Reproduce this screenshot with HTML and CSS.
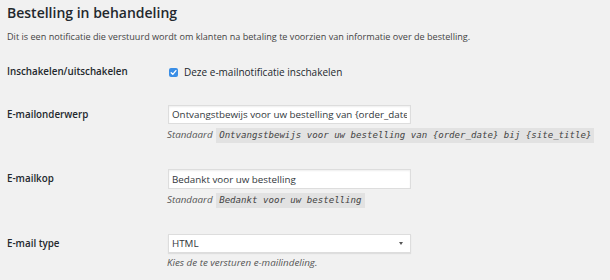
FILE: index.html
```html
<!DOCTYPE html>
<html lang="nl">
<head>
    <meta charset="UTF-8">
    <title>Bestelling in behandeling</title>
    <link rel="stylesheet" href="styles.css">
</head>
<body>
    <h2 class="title">Bestelling in behandeling</h2>
    <p class="intro">Dit is een notificatie die verstuurd wordt om klanten na betaling te voorzien van informatie over de bestelling.</p>

    <div class="form-table">
        <div class="row">
            <div class="label label-check">Inschakelen/uitschakelen</div>
            <div class="field">
                <label class="check">
                    <svg class="box" width="9" height="9" viewBox="0 0 9 9">
                        <rect x="0" y="0" width="9" height="9" rx="2" fill="#3a8ee6"/>
                        <path d="M2.2 4.7 L3.8 6.3 L6.9 2.6" fill="none" stroke="#fff" stroke-width="1.3" stroke-linecap="round" stroke-linejoin="round"/>
                    </svg>
                    Deze e-mailnotificatie inschakelen
                </label>
            </div>
        </div>

        <div class="row">
            <div class="label">E-mailonderwerp</div>
            <div class="field">
                <input class="text-input" type="text" value="Ontvangstbewijs voor uw bestelling van {order_date} bij {site_title}">
                <p class="desc">Standaard <code>Ontvangstbewijs voor uw bestelling van {order_date} bij {site_title}</code></p>
            </div>
        </div>

        <div class="row">
            <div class="label">E-mailkop</div>
            <div class="field">
                <input class="text-input tall" type="text" value="Bedankt voor uw bestelling">
                <p class="desc">Standaard <code>Bedankt voor uw bestelling</code></p>
            </div>
        </div>

        <div class="row">
            <div class="label">E-mail type</div>
            <div class="field">
                <div class="select-wrap">
                    <select class="select">
                        <option>HTML</option>
                    </select>
                </div>
                <p class="desc plain">Kies de te versturen e-mailindeling.</p>
            </div>
        </div>
    </div>
</body>
</html>
```

FILE: styles.css
```css
body {
    margin: 0;
    padding: 0 7px;
    background-color: #f1f1f1;
    color: #23282d;
    font-family: 'Open Sans', 'Liberation Sans', sans-serif;
}
.title {
    margin: 0;
    padding-top: 4px;
    font-size: 14px;
    line-height: 18px;
    font-weight: 600;
}
.intro {
    margin: 8px 0 8px;
    font-size: 9.1px;
    line-height: 14px;
    color: #444;
}
.row {
    display: grid;
    grid-template-columns: 161px 1fr;
    padding: 13px 0;
}
.label {
    font-size: 9.8px;
    font-weight: 600;
    line-height: 20px;
}
.label-check {
    line-height: 14px;
}
.check {
    display: flex;
    align-items: center;
    gap: 6px;
    height: 14px;
    font-size: 10px;
}
.check .box {
    flex: none;
    margin-left: 1px;
}
.text-input,
.select {
    display: block;
    box-sizing: border-box;
    width: 243px;
    height: 19px;
    margin: 0;
    padding: 0 3px;
    border: 1px solid #ddd;
    background-color: #fff;
    box-shadow: inset 0 1px 2px rgba(0, 0, 0, 0.07);
    font-family: inherit;
    font-size: 9.8px;
    color: #32373c;
    outline: none;
}
.text-input.tall {
    height: 20px;
}
.select-wrap {
    position: relative;
    width: 243px;
}
.select {
    appearance: none;
    -webkit-appearance: none;
    border-radius: 0;
    box-shadow: 0 1px 1px rgba(0, 0, 0, 0.08);
}
.select-wrap::after {
    content: "";
    position: absolute;
    top: 8px;
    right: 8px;
    border-left: 2.5px solid transparent;
    border-right: 2.5px solid transparent;
    border-top: 3px solid #555;
}
.desc {
    margin: 3px 0 0 -1px;
    font-size: 9.8px;
    line-height: 15px;
    font-style: italic;
    color: #555;
}
.desc.plain {
    margin-top: 2px;
}
.desc code {
    display: inline-block;
    margin-left: 1px;
    padding: 0 3px;
    background-color: #e2e2e2;
    font-family: 'DejaVu Sans Mono', 'Liberation Mono', monospace;
    font-size: 9.1px;
    font-style: italic;
    color: #444;
}
```
